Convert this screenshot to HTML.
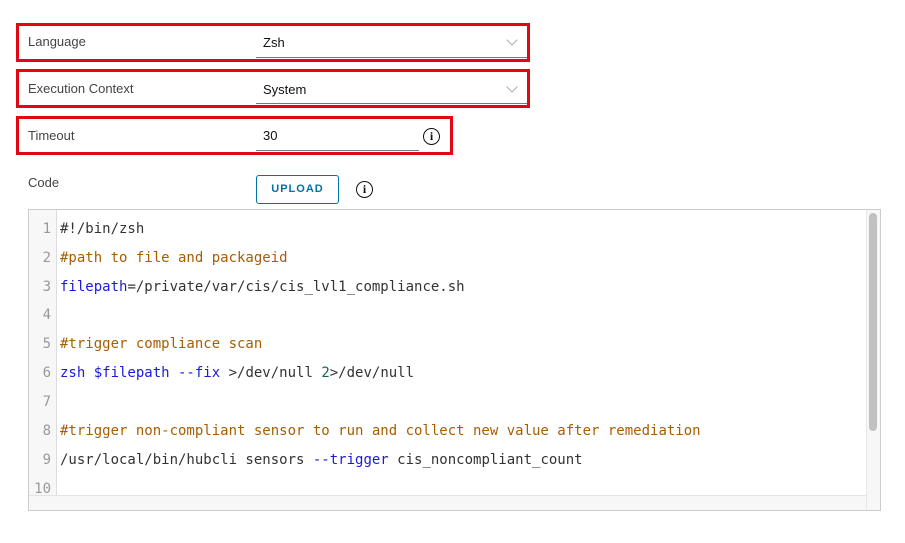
<!DOCTYPE html>
<html><head><style>
*{margin:0;padding:0;box-sizing:border-box}
body{width:905px;height:543px;background:#fff;font-family:"Liberation Sans",sans-serif;position:relative;overflow:hidden;color:#333}
.box{position:absolute;border:3px solid #e30613}
.lbl{position:absolute;font-size:13px;color:#444}
.val{position:absolute;font-size:13px;color:#111}
.ul{position:absolute;height:1px;background:#6b7d86}
.chev{position:absolute;width:8px;height:8px;border-right:1.2px solid #aaa;border-bottom:1.2px solid #aaa;transform:rotate(45deg)}
.info{position:absolute;width:17px;height:17px;border:1.8px solid #111;border-radius:50%;font:bold 12px "Liberation Serif",serif;text-align:center;line-height:14px;color:#111}
.ed{position:absolute;left:28px;top:209px;width:853px;height:302px;border:1px solid #ccc;background:#fff;overflow:hidden}
.gut{position:absolute;left:0;top:0;width:28px;height:285px;background:#f7f7f7;border-right:1px solid #ddd}
.ln{position:absolute;left:0;width:22px;text-align:right;font:14px "DejaVu Sans Mono",monospace;color:#999}
.cl{position:absolute;left:31px;font:14px "DejaVu Sans Mono",monospace;color:#333;white-space:pre}
.c{color:#a65e00}.k{color:#1a1adb}.n{color:#116644}
</style></head><body>
<div class="box" style="left:16px;top:23px;width:514px;height:39px"></div>
<div class="lbl" style="left:28px;top:34px">Language</div>
<div class="val" style="left:263px;top:35px">Zsh</div>
<div class="ul" style="left:256px;top:57px;width:271px"></div>
<div class="chev" style="left:508px;top:36px"></div>

<div class="box" style="left:16px;top:69px;width:514px;height:39px"></div>
<div class="lbl" style="left:28px;top:81px">Execution Context</div>
<div class="val" style="left:263px;top:82px">System</div>
<div class="ul" style="left:256px;top:103px;width:271px"></div>
<div class="chev" style="left:508px;top:83px"></div>

<div class="box" style="left:16px;top:116px;width:437px;height:39px"></div>
<div class="lbl" style="left:28px;top:128px">Timeout</div>
<div class="val" style="left:263px;top:128px">30</div>
<div class="ul" style="left:256px;top:150px;width:163px"></div>
<div class="info" style="left:423px;top:128px">i</div>

<div class="lbl" style="left:28px;top:175px">Code</div>
<div style="position:absolute;left:256px;top:175px;width:83px;height:29px;border:1px solid #0072a3;border-radius:3px;color:#0072a3;font-size:11px;font-weight:bold;letter-spacing:1px;text-align:center;line-height:27px">UPLOAD</div>
<div class="info" style="left:356px;top:181px">i</div>

<div class="ed">
<div class="gut"></div>
<div class="ln" style="top:11px">1</div><div class="cl" style="top:11px">#!/bin/zsh</div>
<div class="ln" style="top:40px">2</div><div class="cl c" style="top:40px">#path to file and packageid</div>
<div class="ln" style="top:69px">3</div><div class="cl" style="top:69px"><span class="k">filepath</span>=/private/var/cis/cis_lvl1_compliance.sh</div>
<div class="ln" style="top:97px">4</div>
<div class="ln" style="top:126px">5</div><div class="cl c" style="top:126px">#trigger compliance scan</div>
<div class="ln" style="top:155px">6</div><div class="cl" style="top:155px"><span class="k">zsh $filepath --fix</span> &gt;/dev/null <span class="n">2</span>&gt;/dev/null</div>
<div class="ln" style="top:184px">7</div>
<div class="ln" style="top:213px">8</div><div class="cl c" style="top:213px">#trigger non-compliant sensor to run and collect new value after remediation</div>
<div class="ln" style="top:242px">9</div><div class="cl" style="top:242px">/usr/local/bin/hubcli sensors <span class="k">--trigger</span> cis_noncompliant_count</div>
<div class="ln" style="top:271px">10</div>
<div style="position:absolute;left:0;top:285px;width:837px;height:16px;background:#f7f7f7;border-top:1px solid #e3e3e3"></div>
<div style="position:absolute;left:837px;top:0;width:15px;height:301px;background:#f7f7f7;border-left:1px solid #e8e8e8"></div>
<div style="position:absolute;left:840px;top:3px;width:8px;height:218px;background:#c1c1c1;border-radius:4px"></div>
</div>
</body></html>
